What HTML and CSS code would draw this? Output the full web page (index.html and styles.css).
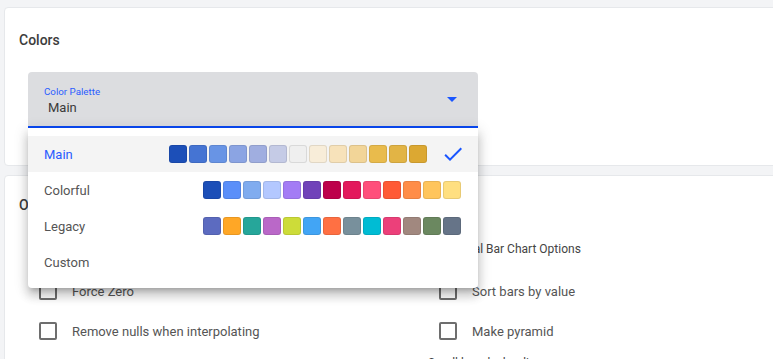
FILE: index.html
```html
<!DOCTYPE html>
<html lang="en">
<head>
<meta charset="utf-8">
<title>Chart settings</title>
<link rel="stylesheet" href="styles.css">
</head>
<body>
<div class="page">
  <section class="card card-colors">
    <h2 class="card-title">Colors</h2>
    <div class="palette-field">
      <div class="field-box">
        <div class="field-text">
          <div class="field-label">Color Palette</div>
          <div class="field-value">Main</div>
        </div>
        <span class="field-arrow"></span>
      </div>
      <div class="menu">
        <div class="option selected">
          <span class="option-name">Main</span>
          <div class="swatches">
            <span class="swatch" style="background:#1c4fb8"></span>
            <span class="swatch" style="background:#4574d3"></span>
            <span class="swatch" style="background:#6894e5"></span>
            <span class="swatch" style="background:#8ba4e3"></span>
            <span class="swatch" style="background:#a0aee0"></span>
            <span class="swatch" style="background:#c5cbe6"></span>
            <span class="swatch" style="background:#efefef"></span>
            <span class="swatch" style="background:#f8edd9"></span>
            <span class="swatch" style="background:#f7e2ba"></span>
            <span class="swatch" style="background:#f2d598"></span>
            <span class="swatch" style="background:#e9bb4c"></span>
            <span class="swatch" style="background:#e2b445"></span>
            <span class="swatch" style="background:#dca832"></span>
          </div>
          <svg class="check" viewBox="0 0 24 24" width="24" height="24"><path d="M9 16.17L4.83 12l-1.42 1.41L9 19 21 7l-1.41-1.41z"/></svg>
        </div>
        <div class="option">
          <span class="option-name">Colorful</span>
          <div class="swatches">
            <span class="swatch" style="background:#1c4fb8"></span>
            <span class="swatch" style="background:#5b8ff9"></span>
            <span class="swatch" style="background:#80acef"></span>
            <span class="swatch" style="background:#b3c8ff"></span>
            <span class="swatch" style="background:#a37cf5"></span>
            <span class="swatch" style="background:#7042b9"></span>
            <span class="swatch" style="background:#bd004b"></span>
            <span class="swatch" style="background:#e3195c"></span>
            <span class="swatch" style="background:#ff4f7b"></span>
            <span class="swatch" style="background:#ff5a36"></span>
            <span class="swatch" style="background:#ff8d48"></span>
            <span class="swatch" style="background:#ffc55c"></span>
            <span class="swatch" style="background:#ffdf80"></span>
          </div>
        </div>
        <div class="option">
          <span class="option-name">Legacy</span>
          <div class="swatches">
            <span class="swatch" style="background:#5c6bc0"></span>
            <span class="swatch" style="background:#ffa726"></span>
            <span class="swatch" style="background:#26a69a"></span>
            <span class="swatch" style="background:#ba68c8"></span>
            <span class="swatch" style="background:#cddc39"></span>
            <span class="swatch" style="background:#42a5f5"></span>
            <span class="swatch" style="background:#ff7043"></span>
            <span class="swatch" style="background:#78909c"></span>
            <span class="swatch" style="background:#00bcd4"></span>
            <span class="swatch" style="background:#ec407a"></span>
            <span class="swatch" style="background:#a1887f"></span>
            <span class="swatch" style="background:#6b8860"></span>
            <span class="swatch" style="background:#667488"></span>
          </div>
        </div>
        <div class="option">
          <span class="option-name">Custom</span>
        </div>
      </div>
    </div>
  </section>

  <section class="card card-options">
    <h2 class="card-title">Options</h2>
    <div class="option-grid">
      <div class="column">
        <div class="section-title">General Chart Options</div>
        <div class="rows">
          <label class="checkbox-row"><span class="checkbox"></span><span class="checkbox-label">Force Zero</span></label>
          <label class="checkbox-row"><span class="checkbox"></span><span class="checkbox-label">Remove nulls when interpolating</span></label>
        </div>
      </div>
      <div class="column">
        <div class="section-title">Horizontal Bar Chart Options</div>
        <div class="rows">
          <label class="checkbox-row"><span class="checkbox"></span><span class="checkbox-label">Sort bars by value</span></label>
          <label class="checkbox-row"><span class="checkbox"></span><span class="checkbox-label">Make pyramid</span></label>
        </div>
        <div class="section-title sub-title">Scroll bars by loading</div>
      </div>
    </div>
  </section>
</div>
</body>
</html>
```

FILE: styles.css
```css
html, body {
  margin: 0;
  padding: 0;
  overflow: hidden;
}

body {
  background: #f3f4f6;
  font-family: Roboto, "Noto Sans", Arial, sans-serif;
  color: #555;
}

.page {
  padding: 7px 0 0 4px;
  margin-right: -12px;
}

.card {
  background: #fff;
  border: 1px solid #e6e8eb;
  border-radius: 4px;
}

.card-colors {
  padding: 22px 14px 37px;
}

.card-options {
  margin-top: 9px;
  padding: 19px 14px 40px;
}

.card-title {
  margin: 0;
  font-size: 14px;
  font-weight: 500;
  line-height: 20px;
  color: #3c3c3c;
}

.palette-field {
  position: relative;
  width: 450px;
  margin: 22px 0 0 9px;
}

.field-box {
  height: 54px;
  display: flex;
  align-items: flex-start;
  padding: 0 21px 0 16px;
  background: #dcdde0;
  border-bottom: 2px solid #0a4af5;
  border-radius: 4px 4px 0 0;
}

.field-text {
  flex: 1;
  padding-top: 14px;
}

.field-label {
  font-size: 9.75px;
  line-height: 12px;
  color: #2a5cff;
}

.field-value {
  margin: 2px 0 0 4px;
  font-size: 13px;
  line-height: 16px;
  color: #3a3a3a;
}

.field-arrow {
  margin-top: 25px;
  width: 0;
  height: 0;
  border-left: 5px solid transparent;
  border-right: 5px solid transparent;
  border-top: 5px solid #1a56ff;
}

.menu {
  position: absolute;
  top: 100%;
  left: 0;
  width: 450px;
  padding: 8px 0;
  background: #fff;
  border-radius: 0 0 4px 4px;
  box-shadow: 0 5px 5px -3px rgba(0,0,0,.2), 0 8px 10px 1px rgba(0,0,0,.14), 0 3px 14px 2px rgba(0,0,0,.12);
  z-index: 10;
}

.option {
  height: 36px;
  display: flex;
  align-items: center;
  padding: 0 17px 0 16px;
  font-size: 13px;
  color: #555;
}

.option.selected {
  background: #f4f4f4;
  color: #2a5cff;
}

.swatches {
  margin-left: auto;
  display: flex;
  gap: 2px;
}

.swatch {
  width: 18px;
  height: 18px;
  box-sizing: border-box;
  border: 1px solid rgba(0,0,0,.09);
  border-radius: 3px;
}

.check {
  margin: 0 -4px 0 14px;
  fill: #1a56ff;
}

.option-grid {
  display: grid;
  grid-template-columns: 400px 400px;
  margin: 24px 0 0 9px;
}

.section-title {
  font-size: 12px;
  line-height: 20px;
  color: #444;
}

.sub-title {
  margin-top: 2px;
}

.rows {
  margin-top: 12px;
}

.checkbox-row {
  height: 40px;
  display: flex;
  align-items: center;
  gap: 15px;
  padding-left: 11px;
}

.checkbox {
  width: 18px;
  height: 18px;
  box-sizing: border-box;
  border: 2px solid #6e6e6e;
  border-radius: 2px;
}

.checkbox-label {
  font-size: 13px;
  color: #555;
}
```
